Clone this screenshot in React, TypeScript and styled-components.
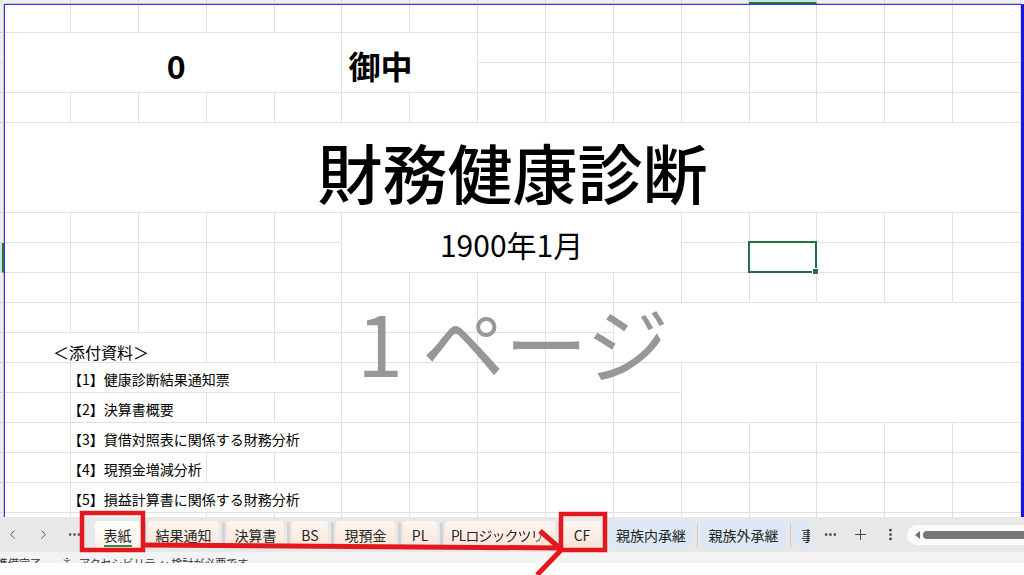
import React from "react";
import styled, { createGlobalStyle } from "styled-components";
import { ChevronLeft, ChevronRight, Ellipsis, Plus, EllipsisVertical, PersonStanding } from "lucide-react";

const GlobalStyle = createGlobalStyle`
  html, body { margin: 0; padding: 0; background: #fff; }
  body { font-family: "Noto Sans CJK JP", "Noto Sans", sans-serif; color: #000; }
`;

// sheet geometry
const COLS = 15;
const ROW_HEIGHTS = [29, 30, 30, 30, 90, 30, 30, 30, 30, 30, 30, 30, 30, 30, 30, 30];
const SELECTED = { row: 6, col: 11 };

type Kind = "name" | "title" | "date" | "note" | "item";
type Merge = { row: number; col: number; rs?: number; cs?: number; text?: string; kind?: Kind; align?: "center" | "flex-start" };

const MERGES: Merge[] = [
  { row: 1, col: 0, rs: 2, cs: 5, text: "0", kind: "name", align: "center" },
  { row: 1, col: 5, rs: 2, cs: 2, text: "御中", kind: "name", align: "flex-start" },
  { row: 4, col: 0, cs: 15, text: "財務健康診断", kind: "title" },
  { row: 5, col: 5, rs: 2, cs: 5, text: "1900年1月", kind: "date" },
  { row: 8, col: 9, rs: 2, cs: 6 },
  { row: 9, col: 0, cs: 3, text: "＜添付資料＞", kind: "note" },
  { row: 10, col: 1, cs: 4, text: "【1】健康診断結果通知票", kind: "item" },
  { row: 10, col: 10, rs: 2, cs: 2 },
  { row: 10, col: 12, rs: 2, cs: 3 },
  { row: 11, col: 1, cs: 2, text: "【2】決算書概要", kind: "item" },
  { row: 12, col: 1, cs: 4, text: "【3】貸借対照表に関係する財務分析", kind: "item" },
  { row: 13, col: 1, cs: 2, text: "【4】現預金増減分析", kind: "item" },
  { row: 14, col: 1, cs: 4, text: "【5】損益計算書に関係する財務分析", kind: "item" },
];

type Tone = "peach" | "blue";
const TABS: { label: string; w: number; tone: Tone; active?: boolean; fade?: boolean }[] = [
  { label: "表紙", w: 45, tone: "peach", active: true },
  { label: "結果通知", w: 71, tone: "peach" },
  { label: "決算書", w: 57, tone: "peach" },
  { label: "BS", w: 36, tone: "peach" },
  { label: "現預金", w: 59, tone: "peach" },
  { label: "PL", w: 34, tone: "peach" },
  { label: "PLロジックツリー", w: 110, tone: "peach", fade: true },
  { label: "CF", w: 38, tone: "peach" },
  { label: "親族内承継", w: 84, tone: "blue" },
  { label: "親族外承継", w: 85, tone: "blue" },
  { label: "事業承継", w: 70, tone: "blue" },
];

function buildCells() {
  const covered = new Set<string>();
  const anchors = new Map<string, Merge>();
  MERGES.forEach((m) => {
    anchors.set(`${m.row}-${m.col}`, m);
    for (let r = m.row; r < m.row + (m.rs ?? 1); r++)
      for (let c = m.col; c < m.col + (m.cs ?? 1); c++)
        if (r !== m.row || c !== m.col) covered.add(`${r}-${c}`);
  });
  const cells: { r: number; c: number; m?: Merge }[] = [];
  ROW_HEIGHTS.forEach((_, r) => {
    for (let c = 0; c < COLS; c++) {
      const key = `${r}-${c}`;
      if (!covered.has(key)) cells.push({ r, c, m: anchors.get(key) });
    }
  });
  return cells;
}

export default function App() {
  const cells = buildCells();
  return (
    <>
      <GlobalStyle />
      <Frame>
        <SheetArea>
          <Corner />
          <ColHeaders>
            {Array.from({ length: COLS }, (_, c) => (
              <ColHead key={c} $active={c === SELECTED.col} />
            ))}
          </ColHeaders>
          <RowHeaders>
            {ROW_HEIGHTS.map((h, r) => (
              <RowHead key={r} $h={h} $active={r === SELECTED.row} />
            ))}
          </RowHeaders>
          <PrintArea>
            <CellGrid>
              {cells.map(({ r, c, m }) => {
                const Comp = m?.kind ? KIND_CELL[m.kind] : Cell;
                const selected = r === SELECTED.row && c === SELECTED.col;
                return (
                  <Comp key={`${r}-${c}`} $cs={m?.cs} $rs={m?.rs} $align={m?.align}>
                    {m?.text}
                    {selected && (
                      <Selection>
                        <FillHandle />
                      </Selection>
                    )}
                  </Comp>
                );
              })}
            </CellGrid>
          </PrintArea>
          <PageLabel>1 ページ</PageLabel>
        </SheetArea>

        <TabBar>
          <NavGroup>
            <NavButton><ChevronLeft size={15} strokeWidth={1.6} /></NavButton>
            <NavButton><ChevronRight size={15} strokeWidth={1.6} /></NavButton>
            <NavButton><Ellipsis size={15} strokeWidth={2.4} /></NavButton>
          </NavGroup>
          <TabStrip>
            {TABS.map((t, i) => (
              <React.Fragment key={t.label}>
                {i > 0 && <TabDivider $tone={t.tone} />}
                <SheetTab $w={t.w} $tone={t.tone} $active={t.active}>
                  <TabLabel $fade={t.fade} $active={t.active}>{t.label}</TabLabel>
                </SheetTab>
              </React.Fragment>
            ))}
          </TabStrip>
          <ActionGroup>
            <ActionButton><Ellipsis size={15} strokeWidth={2.4} /></ActionButton>
            <ActionButton><Plus size={17} strokeWidth={1.4} /></ActionButton>
            <ActionButton><EllipsisVertical size={15} strokeWidth={2.4} /></ActionButton>
          </ActionGroup>
          <ScrollTrack>
            <ScrollArrow />
            <ScrollThumb />
          </ScrollTrack>
        </TabBar>

        <StatusBar>
          <StatusText>
            <span>準備完了</span>
            <StatusItem>
              <PersonStanding size={12} strokeWidth={1.5} />
              アクセシビリティ: 検討が必要です
            </StatusItem>
          </StatusText>
        </StatusBar>
        <BottomGap />

        <Annotation width="1024" height="575" viewBox="0 0 1024 575">
          <g fill="none" stroke="#e3171c" strokeWidth="4.5">
            <rect x="82" y="513" width="61" height="37" />
            <rect x="561" y="514" width="44" height="36" />
          </g>
          <g stroke="#e3171c" strokeWidth="5" strokeLinecap="butt" fill="none">
            <line x1="145" y1="545" x2="560" y2="548" />
            <line x1="540" y1="531" x2="562" y2="550" />
            <line x1="563" y1="548" x2="537" y2="575" />
          </g>
        </Annotation>
      </Frame>
    </>
  );
}

const Frame = styled.div`
  position: relative;
  width: 1024px;
  height: 575px;
  overflow: hidden;
  display: flex;
  flex-direction: column;
  background: #fff;
`;

/* ---------- sheet ---------- */

const SheetArea = styled.div`
  position: relative;
  height: 517px;
  overflow: hidden;
  display: grid;
  grid-template-columns: 4px 1fr;
  grid-template-rows: 4px 1fr;
`;

const Corner = styled.div`
  background: #e6e6e6;
`;

const ColHeaders = styled.div`
  display: grid;
  grid-template-columns: 67px repeat(14, 67.857px);
  background: #f0f0f0;
`;

const ColHead = styled.div<{ $active?: boolean }>`
  border-right: 1px solid #d6d6d6;
  border-bottom: ${(p) => (p.$active ? "2px solid #217346" : "1px solid #c6c6c6")};
  background: ${(p) => (p.$active ? "#d3e3d7" : "#f0f0f0")};
`;

const RowHeaders = styled.div`
  display: flex;
  flex-direction: column;
`;

const RowHead = styled.div<{ $h: number; $active?: boolean }>`
  flex: 0 0 ${(p) => p.$h}px;
  background: ${(p) => (p.$active ? "#d3e3d7" : "#f0f0f0")};
  border-bottom: 1px solid #d6d6d6;
  border-right: ${(p) => (p.$active ? "2px solid #217346" : "1px solid #c6c6c6")};
  box-sizing: border-box;
`;

const PrintArea = styled.div`
  border-left: 1px solid #3434f4;
  border-top: 1px solid #3434f4;
  border-right: 3px solid #1515e6;
  min-width: 0;
`;

const CellGrid = styled.div`
  display: grid;
  grid-template-columns: 66px repeat(14, 1fr);
  grid-template-rows: 28px ${ROW_HEIGHTS.slice(1).map((h) => `${h}px`).join(" ")};
`;

const Cell = styled.div<{ $cs?: number; $rs?: number; $align?: string }>`
  grid-column: span ${(p) => p.$cs ?? 1};
  grid-row: span ${(p) => p.$rs ?? 1};
  position: relative;
  display: flex;
  min-width: 0;
  border-right: 1px solid #e1e1e1;
  border-bottom: 1px solid #e1e1e1;
  white-space: nowrap;
  line-height: 1;
`;

const NameCell = styled(Cell)`
  align-items: center;
  justify-content: ${(p) => p.$align ?? "center"};
  padding: 5px 0 0 6px;
  font-size: 32px;
  font-weight: 700;
`;

const TitleCell = styled(Cell)`
  align-items: center;
  justify-content: center;
  padding-top: 8px;
  font-size: 65px;
  font-weight: 500;
`;

const DateCell = styled(Cell)`
  align-items: center;
  justify-content: center;
  padding-top: 2px;
  font-size: 30px;
`;

const NoteCell = styled(Cell)`
  align-items: flex-end;
  padding: 0 0 2px 48px;
  font-size: 16px;
`;

const ItemCell = styled(Cell)`
  align-items: flex-end;
  padding: 0 0 6px 0;
  font-size: 14px;
  text-indent: -3px;
`;

const KIND_CELL: Record<Kind, typeof Cell> = {
  name: NameCell,
  title: TitleCell,
  date: DateCell,
  note: NoteCell,
  item: ItemCell,
};

const Selection = styled.div`
  position: absolute;
  inset: -2px -1px -1px -2px;
  border: 2px solid #217346;
  z-index: 2;
`;

const FillHandle = styled.div`
  position: absolute;
  right: -4px;
  bottom: -4px;
  width: 5px;
  height: 5px;
  background: #217346;
  border: 1px solid #fff;
`;

const PageLabel = styled.div`
  position: absolute;
  left: 357px;
  top: 300px;
  font-size: 83px;
  line-height: 1;
  color: #979797;
  white-space: nowrap;
  z-index: 3;
`;

/* ---------- sheet tabs ---------- */

const TabBar = styled.div`
  height: 35px;
  display: flex;
  align-items: center;
  background: #e8e8e8;
  font-family: "Noto Sans CJK JP", "Noto Sans", sans-serif;
`;

const NavGroup = styled.div`
  display: flex;
  gap: 6px;
  width: 87px;
  flex: none;
`;

const NavButton = styled.div`
  width: 25px;
  height: 27px;
  display: flex;
  align-items: center;
  justify-content: center;
  color: #555;
`;

const TabStrip = styled.div`
  width: 723px;
  margin-right: 5px;
  flex: none;
  height: 100%;
  display: flex;
  align-items: center;
  padding-left: 8px;
  box-sizing: border-box;
  overflow: hidden;
`;

const TabDivider = styled.div<{ $tone: Tone }>`
  flex: none;
  width: ${(p) => (p.$tone === "blue" ? "1px" : "3px")};
  height: ${(p) => (p.$tone === "blue" ? "24px" : "26px")};
  margin: 0 ${(p) => (p.$tone === "blue" ? "3.5px" : "2.5px")};
  border-radius: 2px;
  background: ${(p) => (p.$tone === "blue" ? "#c9c9c9" : "#d2d2d2")};
`;

const SheetTab = styled.div<{ $w: number; $tone: Tone; $active?: boolean }>`
  flex: none;
  width: ${(p) => p.$w}px;
  height: 27px;
  display: flex;
  align-items: center;
  justify-content: center;
  border-radius: 4px;
  overflow: hidden;
  background: ${(p) =>
    p.$active
      ? "linear-gradient(#ffffff, #fdf1e9)"
      : p.$tone === "blue"
      ? "#dce8f5"
      : "linear-gradient(#fdf6f1, #f9e4d7)"};
`;

const TabLabel = styled.span<{ $fade?: boolean; $active?: boolean }>`
  position: relative;
  font-size: 14px;
  line-height: 18px;
  color: #262626;
  white-space: nowrap;
  padding-bottom: ${(p) => (p.$active ? "1px" : "0")};
  border-bottom: ${(p) => (p.$active ? "2px solid #2f8a4c" : "none")};
  margin-top: ${(p) => (p.$active ? "3px" : "0")};
  ${(p) =>
    p.$fade &&
    `max-width: 98px; letter-spacing: -1px; overflow: hidden; -webkit-mask-image: linear-gradient(90deg, #000 84%, transparent); mask-image: linear-gradient(90deg, #000 84%, transparent);`}
`;

const ActionGroup = styled.div`
  display: flex;
  flex: none;
`;

const ActionButton = styled.div`
  width: 30px;
  height: 27px;
  display: flex;
  align-items: center;
  justify-content: center;
  color: #444;
`;

const ScrollTrack = styled.div`
  flex: 1;
  height: 20px;
  margin-left: 2px;
  display: flex;
  align-items: center;
  gap: 3px;
  padding-left: 8px;
  background: #fafafa;
  border-radius: 10px 0 0 10px;
`;

const ScrollArrow = styled.div`
  width: 0;
  height: 0;
  border-top: 4px solid transparent;
  border-bottom: 4px solid transparent;
  border-right: 5px solid #707070;
`;

const ScrollThumb = styled.div`
  flex: 1;
  height: 8px;
  border-radius: 4px 0 0 4px;
  background: #767676;
`;

/* ---------- status ---------- */

const StatusBar = styled.div`
  height: 11px;
  overflow: hidden;
  background: #f3f3f3;
`;

const StatusText = styled.div`
  display: flex;
  gap: 20px;
  margin-left: -3px;
  padding-top: 4px;
  font-size: 11px;
  line-height: 14px;
  color: #333;
`;

const StatusItem = styled.span`
  display: flex;
  align-items: flex-start;
  gap: 6px;
`;

const BottomGap = styled.div`
  flex: 1;
  background: #fff;
`;

const Annotation = styled.svg`
  position: absolute;
  left: 0;
  top: 0;
  pointer-events: none;
  z-index: 10;
`;
